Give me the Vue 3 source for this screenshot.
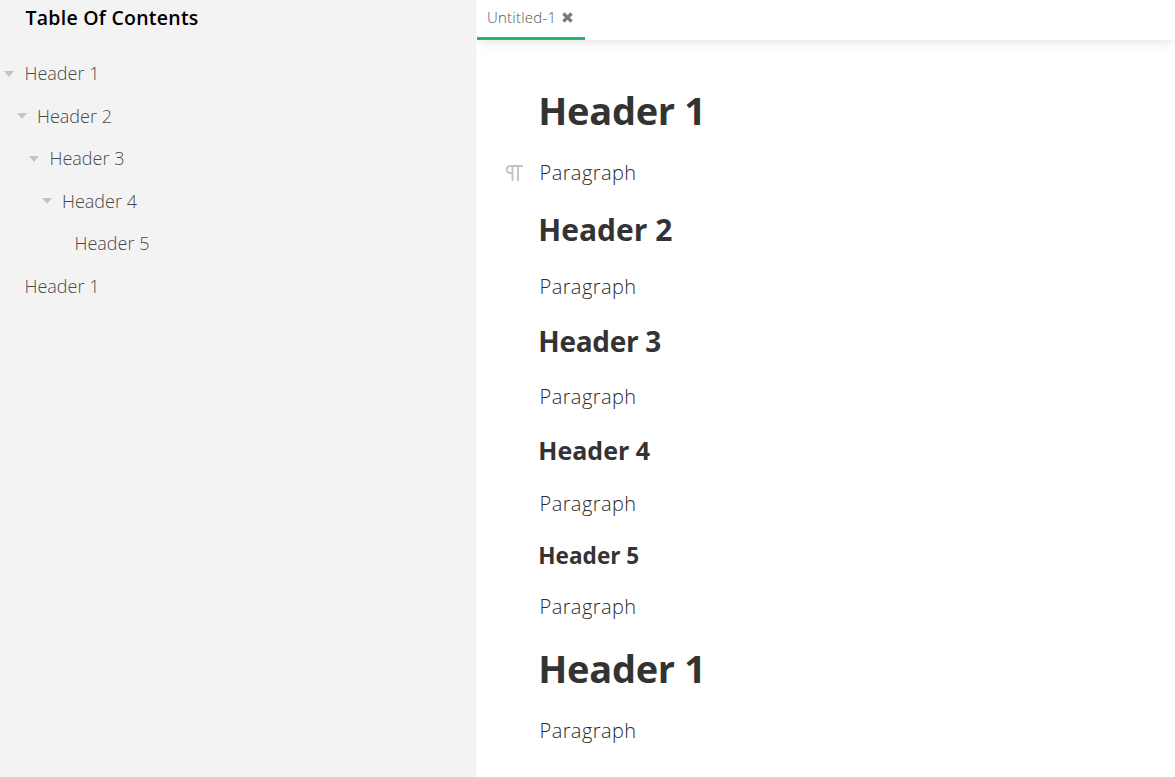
<script setup>
const toc = [
  { text: 'Header 1', depth: 0, open: true },
  { text: 'Header 2', depth: 1, open: true },
  { text: 'Header 3', depth: 2, open: true },
  { text: 'Header 4', depth: 3, open: true },
  { text: 'Header 5', depth: 4, open: false },
  { text: 'Header 1', depth: 0, open: false },
]
const blocks = [
  { tag: 'h1', text: 'Header 1', active: true },
  { tag: 'h2', text: 'Header 2' },
  { tag: 'h3', text: 'Header 3' },
  { tag: 'h4', text: 'Header 4' },
  { tag: 'h5', text: 'Header 5' },
  { tag: 'h1', text: 'Header 1' },
]
</script>

<template>
  <div class="app">
    <aside class="side">
      <div class="title">Table Of Contents</div>
      <ul class="tree">
        <li v-for="(item, i) in toc" :key="i" :style="{ paddingLeft: item.depth * 12.5 + 'px' }">
          <span class="arrow"><svg v-if="item.open" width="10" height="6" viewBox="0 0 10 6"><path d="M0 0H10L5 6Z" fill="#c0c4cc" /></svg></span>
          <span class="label">{{ item.text }}</span>
        </li>
      </ul>
    </aside>
    <main class="main">
      <header class="tabs">
        <div class="tab">
          <span>Untitled-1</span>
          <svg width="11" height="11" viewBox="0 0 11 11"><path d="M1.4 1.5L9.6 9.5M9.6 1.5L1.4 9.5" stroke="#7a7a7a" stroke-width="3.2" /></svg>
        </div>
      </header>
      <article class="doc">
        <section v-for="(b, i) in blocks" :key="i" :class="['sec', b.tag]">
          <component :is="b.tag">{{ b.text }}</component>
          <p>
            <svg v-if="b.active" class="mark" width="19" height="18" viewBox="0 0 19 18"><path d="M18 2H5.2A3.5 3.5 0 0 0 5.2 9H8M7.5 2V17M13 2V17" fill="none" stroke="#c0c4cc" stroke-width="2" /></svg>
            Paragraph
          </p>
        </section>
      </article>
    </main>
  </div>
</template>

<style>
body { margin: 0; overflow: hidden; }
</style>
<style scoped>
.app { display: flex; width: 1175px; height: 777px; overflow: hidden; background: #fff; font-family: "Open Sans", sans-serif; }
.side { width: 476px; flex: none; background: #f3f3f3; border-right: 1px solid #fafafa; box-sizing: content-box; }
.title { margin: 4px 0 0 25.5px; font-size: 19.5px; line-height: 28px; font-weight: 600; letter-spacing: .25px; color: #000; }
.tree { list-style: none; margin: 20px 0 0; padding: 0; }
.tree li { display: flex; align-items: center; height: 42.5px; font-size: 18px; color: #48494b; font-weight: 300; }
.arrow { width: 20.5px; padding-left: 4px; padding-top: 1px; display: flex; }
.main { flex: 1; min-width: 0; }
.tabs { height: 40px; box-shadow: 0 0 12px rgba(0, 0, 0, .14); clip-path: inset(0 0 -15px 0); }
.tab { width: 98px; height: 35px; padding: 0 0 2px 10px; border-bottom: 3px solid #21b56f; display: flex; align-items: center; gap: 6px; font-size: 15px; font-weight: 300; letter-spacing: .22px; color: #555; }
.tab span { position: relative; top: -1px; }
.doc { padding: 38px 0 0 62px; color: #333; }
.sec > * { margin: 0; font-weight: 700; white-space: nowrap; }
.sec > p { margin-left: .5px; font-size: 20px; line-height: 32px; font-weight: 300; letter-spacing: .43px; color: #2b2b2b; position: relative; }
.mark { position: absolute; left: -35px; top: 7px; }
.h1 { height: 128px; }
.h1 > h1 { font-size: 38px; line-height: 64px; letter-spacing: -.3px; margin: 0 0 15px -.7px; }
.h2 { height: 114px; }
.h2 > h2 { font-size: 30px; line-height: 48px; margin: 0 0 17px -.7px; }
.h3 { height: 110px; }
.h3 > h3 { font-size: 28px; line-height: 42px; letter-spacing: -.3px; margin: 0 0 19px -.7px; }
.h4 { height: 107px; }
.h4 > h4 { font-size: 25px; line-height: 40px; margin: 0 0 18px -.7px; }
.h5 { height: 99px; }
.h5 > h5 { font-size: 22.6px; line-height: 38px; margin: 0 0 16px -.7px; }
</style>
